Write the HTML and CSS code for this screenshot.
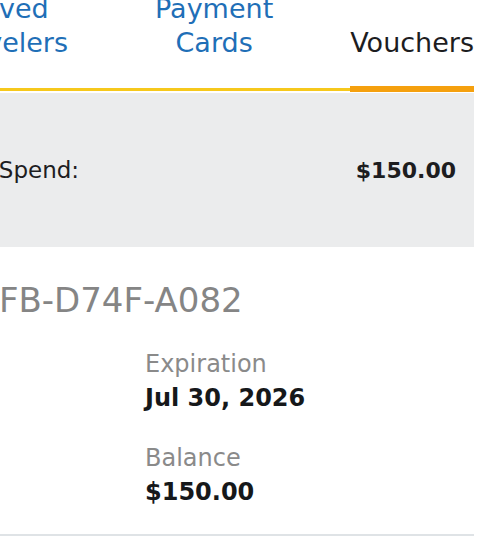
FILE: index.html
```html
<!DOCTYPE html>
<html lang="en">
<head>
    <meta charset="UTF-8">
    <meta name="viewport" content="width=device-width, initial-scale=1.0">
    <title>Vouchers</title>
    <link rel="stylesheet" href="styles.css">
</head>
<body>
    <div class="screen">
        <nav class="tabs">
            <a class="tab tab-saved">Saved<br>Travelers</a>
            <a class="tab">Payment<br>Cards</a>
            <a class="tab active">Vouchers</a>
        </nav>

        <div class="summary">
            <span class="summary-label">Available to Spend:</span>
            <span class="summary-amount">$150.00</span>
        </div>

        <div class="voucher">
            <div class="voucher-code">3A1C-C0FB-D74F-A082</div>
            <div class="voucher-details">
                <div class="detail">
                    <div class="detail-label">Status</div>
                    <div class="detail-value">Active</div>
                </div>
                <div class="detail">
                    <div class="detail-label">Expiration</div>
                    <div class="detail-value">Jul 30, 2026</div>
                </div>
                <div class="detail">
                    <div class="detail-label">Original</div>
                    <div class="detail-value">$150.00</div>
                </div>
                <div class="detail">
                    <div class="detail-label">Balance</div>
                    <div class="detail-value">$150.00</div>
                </div>
            </div>
        </div>
    </div>
</body>
</html>
```

FILE: styles.css
```css
/* page */
body {
    font-family: "DejaVu Sans", sans-serif;
    background: #ffffff;
    margin: 0;
    color: #1d1d1f;
    overflow: hidden;
}

.screen {
    width: 654px;
    margin-left: -180px;
}

/* tabs */
.tabs {
    display: flex;
    justify-content: flex-end;
    align-items: flex-end;
    gap: 77px;
    margin-top: -8px;
    padding-bottom: 28px;
    border-bottom: 3px solid #f6c81c; /* yellow rail */
}
.tab {
    position: relative;
    font-size: 27px;
    line-height: 34px;
    text-align: center;
    color: #1f6fb7;
    cursor: pointer;
}
.tab-saved { margin-right: 10px; }
.tab.active { color: #1d1d1f; }
.tab.active::after {
    content: "";
    position: absolute;
    left: 0;
    right: 0;
    bottom: -32px;
    height: 6px;
    background: #f5a00e; /* orange marker on the current tab */
}

/* amount left to spend */
.summary {
    margin-top: 2px;
    height: 154px;
    background: #ebeced;
    display: flex;
    justify-content: space-between;
    align-items: center;
    padding: 0 18px 0 37px;
}
.summary-label { font-size: 23px; }
.summary-amount { font-size: 22px; font-weight: 700; }

/* voucher card */
.voucher {
    padding: 33px 18px 27px;
    border-bottom: 2px solid #dfe3e6;
}
.voucher-code {
    margin-left: 13px;
    font-size: 34px;
    line-height: 40px;
    color: #858585;
}
.voucher-details {
    display: grid;
    grid-template-columns: 307px 1fr;
    row-gap: 30px;
    margin-top: 29px;
}
.detail-label {
    font-size: 24px;
    line-height: 30px;
    color: #8a8a8a;
    margin-bottom: 4px;
}
.detail-value {
    font-size: 24px;
    line-height: 30px;
    font-weight: 700;
    color: #16181a;
}
```
